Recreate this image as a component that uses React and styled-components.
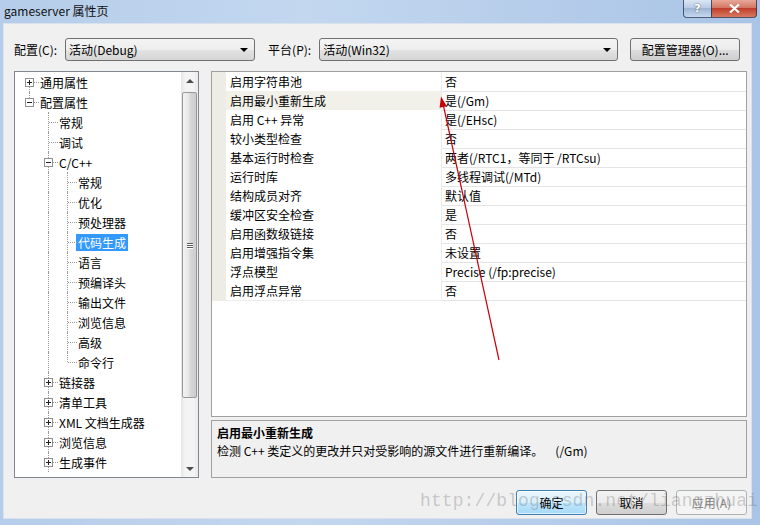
import React from "react";
import styled, { createGlobalStyle, css } from "styled-components";

const GlobalStyle = createGlobalStyle`
  html, body {
    margin: 0;
    padding: 0;
    background: #fff;
  }
  body {
    font-family: "Noto Sans CJK SC", "Noto Sans", sans-serif;
    font-size: 12px;
    color: #000;
  }
  * {
    box-sizing: border-box;
  }
`;

const Window = styled.div`
	position: relative;
	width: 760px;
	height: 525px;
	display: flex;
	flex-direction: column;
	padding: 0 8px 6px 3px;
	background: linear-gradient(to right, #b5cdea, #c3d7ef 40%, #a9c4e6 100%);
	overflow: hidden;
`;

const TitleBar = styled.div`
	height: 23px;
	flex: none;
	display: flex;
	align-items: flex-start;
	justify-content: space-between;
	margin-right: -5px;
`;

const Title = styled.span`
	margin: 3px 0 0 1px;
	font-size: 12px;
	line-height: 16px;
	color: #111;
`;

const CaptionButtons = styled.div`
	display: flex;
`;

const CaptionButton = styled.div`
	height: 18px;
	width: ${(p) => p.$w}px;
	display: flex;
	align-items: center;
	justify-content: center;
	color: #fff;
	font-family: "DejaVu Sans", sans-serif;
	font-weight: bold;
	font-size: 11px;
	border: 1px solid rgba(30, 50, 85, 0.75);
	border-top: none;
	text-shadow: 0 0 2px rgba(0, 0, 0, 0.6);
	background: linear-gradient(#dbe6f4, #b9cce4 45%, #9fb6d4 50%, #c6d8ee);

	&:first-child {
		border-bottom-left-radius: 4px;
		border-right: none;
	}

	${(p) =>
		p.$close &&
		css`
			border-bottom-right-radius: 4px;
			background: linear-gradient(#e9a899, #d27763 45%, #c03d2b 50%, #d77b61);
		`}
`;

const Client = styled.div`
	flex: 1;
	display: flex;
	flex-direction: column;
	background: #f0f0f0;
	border: 1px solid #d9e2ec;
	padding: 14px 4px 0 10px;
`;

const Toolbar = styled.div`
	height: 23px;
	display: flex;
	align-items: center;
`;

const FieldLabel = styled.span`
	margin-left: ${(p) => p.$gap || 0}px;
	margin-right: 8px;
	white-space: nowrap;
	line-height: 16px;
`;

const Combo = styled.div`
	width: ${(p) => p.$w}px;
	height: 23px;
	display: flex;
	align-items: center;
	justify-content: space-between;
	padding: 0 6px 0 3px;
	border: 1px solid #707070;
	border-radius: 3px;
	background: linear-gradient(#f4f4f4, #eeeeee 50%, #e2e2e2 51%, #d6d6d6);
	line-height: 16px;
`;

const DownTriangle = styled.span`
	width: 0;
	height: 0;
	border-left: 4px solid transparent;
	border-right: 4px solid transparent;
	border-top: 4px solid ${(p) => p.$color || "#000"};
`;

const UpTriangle = styled.span`
	width: 0;
	height: 0;
	border-left: 4px solid transparent;
	border-right: 4px solid transparent;
	border-bottom: 4px solid #4d4d4d;
`;

const PushButton = styled.button`
	width: ${(p) => p.$w || 71}px;
	height: ${(p) => p.$h || 25}px;
	margin-left: ${(p) => p.$gap || 0}px;
	padding: 0;
	font: inherit;
	font-size: 12px;
	color: #000;
	border: 1px solid #707070;
	border-radius: 3px;
	background: linear-gradient(#f2f2f2, #ebebeb 50%, #dddddd 51%, #cfcfcf);

	${(p) =>
		p.$default &&
		css`
			border-color: #3c7fb1;
			background: linear-gradient(#eaf6fd, #d9f0fc 50%, #bee6fd 51%, #a7d9f5);
			box-shadow: inset 0 0 0 1px rgba(255, 255, 255, 0.6);
		`}

	${(p) =>
		p.disabled &&
		css`
			border-color: #adb2b5;
			background: #f4f4f4;
			color: #838383;
		`}
`;

const Main = styled.div`
	margin-top: 10px;
	height: 407px;
	display: flex;
	gap: 12px;
`;

const TreePanel = styled.div`
	width: 185px;
	display: flex;
	background: #fff;
	border: 1px solid #828790;
`;

const TreeList = styled.div`
	flex: 1;
	padding: 0 0 0 5px;
	overflow: hidden;
`;

const TreeRow = styled.div`
	display: flex;
	align-items: center;
	height: 20px;
`;

const Guide = styled.span`
	position: relative;
	flex: none;
	width: 19px;
	height: 20px;

	${(p) =>
		p.$line &&
		css`
			&::before {
				content: "";
				position: absolute;
				left: 9px;
				top: 0;
				bottom: 0;
				border-left: 1px dotted #9a9a9a;
			}
		`}
`;

const Branch = styled.span`
	position: relative;
	flex: none;
	width: 19px;
	height: 20px;

	&::before {
		content: "";
		position: absolute;
		left: 9px;
		top: ${(p) => (p.$up ? 0 : 10)}px;
		bottom: ${(p) => (p.$down ? 0 : 10)}px;
		border-left: 1px dotted #9a9a9a;
	}

	&::after {
		content: "";
		position: absolute;
		left: 10px;
		top: 10px;
		width: 9px;
		border-top: 1px dotted #9a9a9a;
	}

	svg {
		position: absolute;
		left: 5px;
		top: 6px;
		z-index: 1;
	}
`;

const TreeLabel = styled.span`
	margin-left: -1px;
	padding: 0 2px;
	height: 17px;
	line-height: 17px;
	white-space: nowrap;

	${(p) =>
		p.$selected &&
		css`
			background: #3399ff;
			color: #fff;
		`}
`;

const ScrollBar = styled.div`
	width: 17px;
	flex: none;
	display: flex;
	flex-direction: column;
	background: linear-gradient(to right, #e6e6e6, #f4f4f4 25%, #f4f4f4 75%, #e9e9e9);
`;

const ScrollArrow = styled.div`
	height: 17px;
	flex: none;
	display: flex;
	align-items: center;
	justify-content: center;
	margin-top: ${(p) => (p.$bottom ? "auto" : 0)};
`;

const Thumb = styled.div`
	margin: 3px 1px 0;
	height: 306px;
	display: flex;
	align-items: center;
	justify-content: center;
	border: 1px solid #989898;
	border-radius: 2px;
	background: linear-gradient(to right, #f3f3f3, #e6e6e6 45%, #d7d7d7 55%, #cdcdcd);
`;

const Grip = styled.span`
	width: 6px;
	height: 1px;
	margin-top: -4px;
	background: #5a5a5a;
	box-shadow: 0 2px 0 #5a5a5a, 0 4px 0 #5a5a5a, 0 1px 0 #fff, 0 3px 0 #fff, 0 5px 0 #fff;
`;

const RightPanel = styled.div`
	flex: 1;
	display: flex;
	flex-direction: column;
	gap: 3px;
`;

const PropGrid = styled.div`
	height: 346px;
	background: #fff;
	border: 1px solid #a0a0a0;
`;

const PropRow = styled.div`
	display: grid;
	grid-template-columns: 14px 215px 1fr;
	height: 19px;
`;

const Strip = styled.div`
	background: #eeede5;
`;

const NameCell = styled.div`
	padding-left: 4px;
	line-height: 19px;
	border-bottom: 1px solid #ededed;
	white-space: nowrap;
	background: ${(p) => (p.$current ? "#f1f0e9" : "#fff")};
`;

const ValueCell = styled.div`
	padding-left: 3px;
	line-height: 19px;
	border-left: 1px solid #ececec;
	border-bottom: 1px solid #e4e4e4;
	white-space: nowrap;
`;

const DescBox = styled.div`
	height: 58px;
	padding: 3px 5px;
	border: 1px solid #a0a0a0;
	background: #f0f0f0;
	line-height: 18px;
`;

const DescTitle = styled.div`
	font-weight: bold;
`;

const DescSwitch = styled.span`
	margin-left: 12px;
`;

const ButtonRow = styled.div`
	margin-top: 12px;
	display: flex;
	justify-content: flex-end;
`;

const Watermark = styled.span`
	position: absolute;
	left: 420px;
	top: 491px;
	font-family: "Liberation Mono", monospace;
	font-size: 18px;
	letter-spacing: 0.1px;
	color: rgba(110, 110, 110, 0.33);
	pointer-events: none;
	white-space: nowrap;
`;

const Annotation = styled.svg`
	position: absolute;
	left: 0;
	top: 0;
	pointer-events: none;
`;

function Expander({ open }) {
	return (
		<svg width="9" height="9" viewBox="0 0 9 9">
			<rect x="0.5" y="0.5" width="8" height="8" fill="#fff" stroke="#919191" />
			<path d="M2 4.5h5" stroke="#1e1e1e" />
			{!open && <path d="M4.5 2v5" stroke="#1e1e1e" />}
		</svg>
	);
}

const leaf = (t, extra = {}) => ({ d: 2, t, up: true, down: true, g: [false, true], ...extra });
const group = (t, extra = {}) => ({ d: 1, t, up: true, down: true, g: [false], ...extra });

const tree = [
	{ d: 0, t: "通用属性", e: "plus", up: false, down: true, g: [] },
	{ d: 0, t: "配置属性", e: "minus", up: true, down: false, g: [] },
	group("常规"),
	group("调试"),
	group("C/C++", { e: "minus" }),
	leaf("常规"),
	leaf("优化"),
	leaf("预处理器"),
	leaf("代码生成", { selected: true }),
	leaf("语言"),
	leaf("预编译头"),
	leaf("输出文件"),
	leaf("浏览信息"),
	leaf("高级"),
	leaf("命令行", { down: false }),
	group("链接器", { e: "plus" }),
	group("清单工具", { e: "plus" }),
	group("XML 文档生成器", { e: "plus" }),
	group("浏览信息", { e: "plus" }),
	group("生成事件", { e: "plus" }),
];

const properties = [
	["启用字符串池", "否"],
	["启用最小重新生成", "是(/Gm)", true],
	["启用 C++ 异常", "是(/EHsc)"],
	["较小类型检查", "否"],
	["基本运行时检查", "两者(/RTC1，等同于 /RTCsu)"],
	["运行时库", "多线程调试(/MTd)"],
	["结构成员对齐", "默认值"],
	["缓冲区安全检查", "是"],
	["启用函数级链接", "否"],
	["启用增强指令集", "未设置"],
	["浮点模型", "Precise (/fp:precise)"],
	["启用浮点异常", "否"],
];

export default function App() {
	return (
		<>
			<GlobalStyle />
			<Window>
				<TitleBar>
					<Title>gameserver 属性页</Title>
					<CaptionButtons>
						<CaptionButton $w={28}>?</CaptionButton>
						<CaptionButton $w={46} $close>
							<svg width="11" height="9" viewBox="0 0 11 9">
								<path d="M1 0.5l9 8M10 0.5l-9 8" stroke="#fff" strokeWidth="2.2" />
							</svg>
						</CaptionButton>
					</CaptionButtons>
				</TitleBar>

				<Client>
					<Toolbar>
						<FieldLabel>配置(C):</FieldLabel>
						<Combo $w={190}>
							<span>活动(Debug)</span>
							<DownTriangle />
						</Combo>
						<FieldLabel $gap={13}>平台(P):</FieldLabel>
						<Combo $w={299}>
							<span>活动(Win32)</span>
							<DownTriangle />
						</Combo>
						<PushButton $w={110} $h={23} $gap={12}>
							配置管理器(O)...
						</PushButton>
					</Toolbar>

					<Main>
						<TreePanel>
							<TreeList>
								{tree.map((n, i) => (
									<TreeRow key={i}>
										{n.g.map((line, j) => (
											<Guide key={j} $line={line} />
										))}
										<Branch $up={n.up} $down={n.down}>
											{n.e && <Expander open={n.e === "minus"} />}
										</Branch>
										<TreeLabel $selected={n.selected}>{n.t}</TreeLabel>
									</TreeRow>
								))}
							</TreeList>
							<ScrollBar>
								<ScrollArrow>
									<UpTriangle />
								</ScrollArrow>
								<Thumb>
									<Grip />
								</Thumb>
								<ScrollArrow $bottom>
									<DownTriangle $color="#4d4d4d" />
								</ScrollArrow>
							</ScrollBar>
						</TreePanel>

						<RightPanel>
							<PropGrid>
								{properties.map(([name, value, current]) => (
									<PropRow key={name}>
										<Strip />
										<NameCell $current={current}>{name}</NameCell>
										<ValueCell>{value}</ValueCell>
									</PropRow>
								))}
							</PropGrid>
							<DescBox>
								<DescTitle>启用最小重新生成</DescTitle>
								<div>
									检测 C++ 类定义的更改并只对受影响的源文件进行重新编译。
									<DescSwitch>(/Gm)</DescSwitch>
								</div>
							</DescBox>
						</RightPanel>
					</Main>

					<ButtonRow>
						<PushButton $default>确定</PushButton>
						<PushButton $gap={9}>取消</PushButton>
						<PushButton $gap={9} disabled>
							应用(A)
						</PushButton>
					</ButtonRow>
				</Client>

				<Watermark>http://blog.csdn.net/liangzhuai</Watermark>

				<Annotation width="760" height="525" viewBox="0 0 760 525">
					<path d="M499 360L443.5 106" stroke="#c8000a" strokeWidth="1.2" fill="none" />
					<path d="M441 96.5L446.8 106.2L439.6 107.7Z" fill="#c8000a" />
				</Annotation>
			</Window>
		</>
	);
}
